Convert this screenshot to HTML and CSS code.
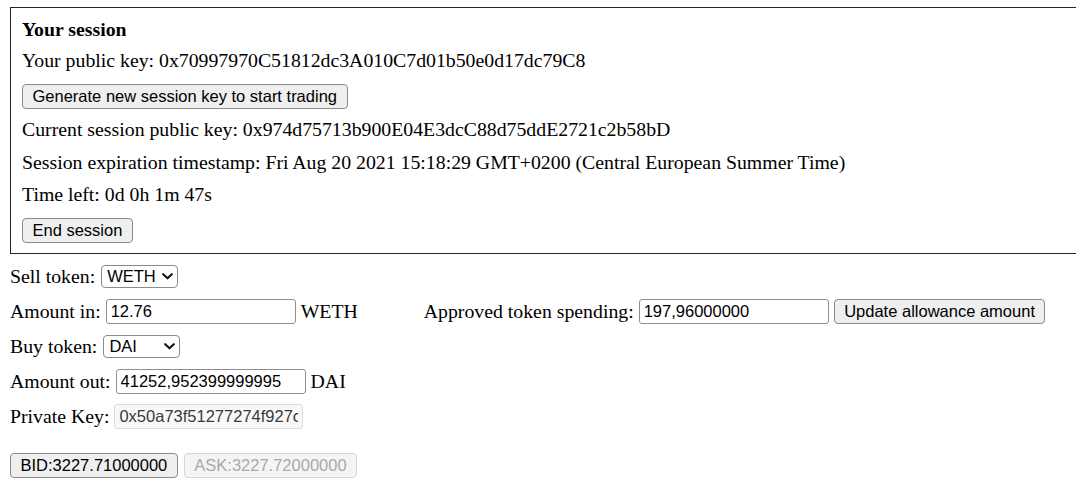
FILE: index.html
```html
<!DOCTYPE html>
<html lang="en">
<head>
<meta charset="utf-8">
<title>Session trading</title>
<link rel="stylesheet" href="styles.css">
</head>
<body>
  <div class="session">
    <div class="line title">Your session</div>
    <div class="line">Your public key: 0x70997970C51812dc3A010C7d01b50e0d17dc79C8</div>
    <div class="ctl"><button class="btn">Generate new session key to start trading</button></div>
    <div class="line">Current session public key: 0x974d75713b900E04E3dcC88d75ddE2721c2b58bD</div>
    <div class="line">Session expiration timestamp: Fri Aug 20 2021 15:18:29 GMT+0200 (Central European Summer Time)</div>
    <div class="line">Time left: 0d 0h 1m 47s</div>
    <div class="ctl"><button class="btn">End session</button></div>
  </div>

  <div class="form">
    <div class="row">
      <span>Sell token:</span>
      <span class="select-wrap">
        <select class="sel"><option>WETH</option><option>DAI</option></select>
        <svg class="chev" width="11" height="7" viewBox="0 0 11 7"><polyline points="1.2,1.2 5.5,5.3 9.8,1.2" fill="none" stroke="#111" stroke-width="2.1" stroke-linecap="round" stroke-linejoin="round"/></svg>
      </span>
    </div>
    <div class="row">
      <span>Amount in:</span>
      <input class="inp" type="text" value="12.76">
      <span>WETH</span>
      <span class="approved">Approved token spending:</span>
      <input class="inp" type="text" value="197,96000000">
      <button class="btn">Update allowance amount</button>
    </div>
    <div class="row">
      <span>Buy token:</span>
      <span class="select-wrap">
        <select class="sel"><option>DAI</option><option>WETH</option></select>
        <svg class="chev" width="11" height="7" viewBox="0 0 11 7"><polyline points="1.2,1.2 5.5,5.3 9.8,1.2" fill="none" stroke="#111" stroke-width="2.1" stroke-linecap="round" stroke-linejoin="round"/></svg>
      </span>
    </div>
    <div class="row">
      <span>Amount out:</span>
      <input class="inp" type="text" value="41252,952399999995">
      <span>DAI</span>
    </div>
    <div class="row">
      <span>Private Key:</span>
      <input class="inp inp-disabled" type="text" value="0x50a73f51277274f927c8e6d1b2a94f05c3e7d8a19b" disabled>
    </div>
    <div class="row row-trade">
      <button class="btn">BID:3227.71000000</button>
      <button class="btn btn-disabled" disabled>ASK:3227.72000000</button>
    </div>
  </div>
</body>
</html>
```

FILE: styles.css
```css
html {
  overflow: hidden;
  background: #fff;
}

body {
  margin: 7px 0 7px 10px;
  font-family: "Liberation Serif", "Times New Roman", serif;
  font-size: 19.8px;
  color: #000;
}

.session {
  border: 1px solid #262626;
  border-right: none;
  padding: 10px 0 9.5px 11px;
  display: flex;
  flex-direction: column;
  align-items: flex-start;
}

.line {
  line-height: 23px;
  margin-top: 9.5px;
  white-space: nowrap;
}

.title {
  margin-top: 0;
  margin-bottom: -2px;
  font-weight: bold;
}

.ctl {
  margin-top: 12px;
  display: flex;
}

.btn {
  font-family: "Liberation Sans", Arial, sans-serif;
  font-size: 16.5px;
  color: #000;
  height: 25px;
  padding: 0 9.5px;
  margin: 0;
  background: #efefef;
  border: 1px solid #8a8a8a;
  border-radius: 4px;
  line-height: 23px;
  white-space: nowrap;
}

.btn-disabled {
  color: #a9a9a9;
  background: #f4f4f4;
  border-color: #d6d6d6;
}

.form {
  margin-top: 10px;
  display: flex;
  flex-direction: column;
  gap: 10px;
}

.row {
  height: 25px;
  display: flex;
  align-items: center;
  gap: 5px;
  white-space: nowrap;
}

.row-trade {
  margin-top: 14px;
  gap: 6px;
}

.approved {
  margin-left: 61px;
}

.inp {
  font-family: "Liberation Sans", Arial, sans-serif;
  font-size: 16.5px;
  color: #000;
  width: 190px;
  height: 25px;
  box-sizing: border-box;
  margin: 0;
  padding: 0 4px;
  border: 1px solid #8f8f8f;
  border-radius: 3px;
  background: #fff;
  outline: none;
}

.inp-disabled {
  width: 189px;
  background: #f8f8f8;
  border-color: #dcdcdc;
  color: #3a3a3a;
  -webkit-text-fill-color: #3a3a3a;
  opacity: 1;
}

.select-wrap {
  position: relative;
  display: inline-flex;
  align-items: center;
  margin-left: 1px;
}

.sel {
  -webkit-appearance: none;
  appearance: none;
  font-family: "Liberation Sans", Arial, sans-serif;
  font-size: 16.5px;
  color: #000;
  width: 77px;
  height: 23px;
  box-sizing: border-box;
  margin: 0;
  padding: 0 0 0 5px;
  border: 1px solid #8a8a8a;
  border-radius: 4px;
  background: #fff;
  line-height: 21px;
}

.chev {
  position: absolute;
  right: 5px;
  top: 8px;
  pointer-events: none;
}
```
